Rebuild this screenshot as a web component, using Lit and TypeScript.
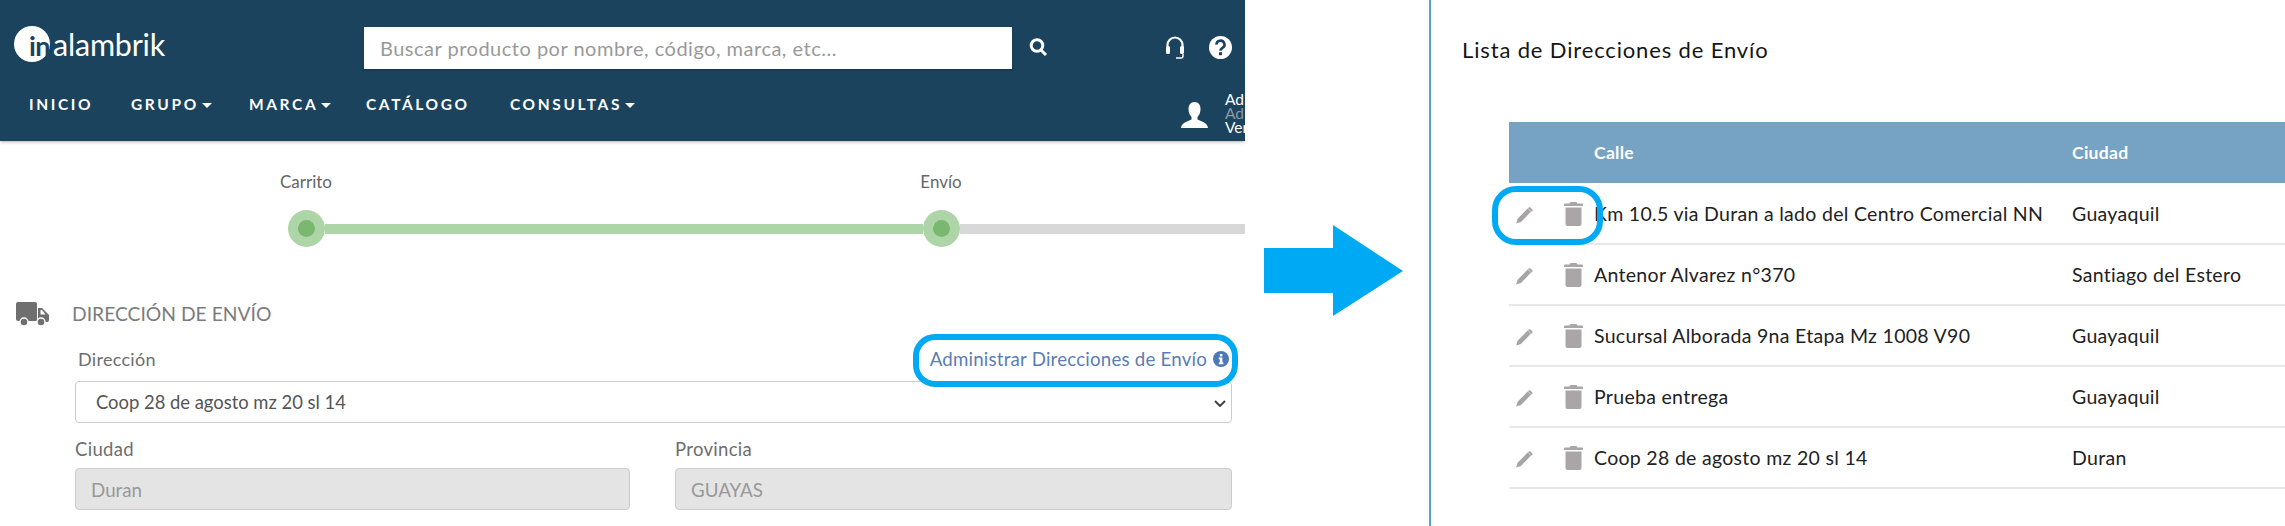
import { LitElement, html, css } from "lit";
import { customElement } from "lit/decorators.js";

const ROWS = [
  ["Km 10.5 via Duran a lado del Centro Comercial NN", "Guayaquil"],
  ["Antenor Alvarez n°370", "Santiago del Estero"],
  ["Sucursal Alborada 9na Etapa Mz 1008 V90", "Guayaquil"],
  ["Prueba entrega", "Guayaquil"],
  ["Coop 28 de agosto mz 20 sl 14", "Duran"],
];

const caret = html`<span class="caret"></span>`;

const pencil = html`<svg class="pencil" viewBox="0 0 18 17" width="18" height="17">
  <path fill="#a8a4a5" d="M12.6 1.6 16 4.6 6 15 1.2 16.6 2.6 11.8z"/>
  <path fill="#a8a4a5" d="M13.6.6a1.3 1.3 0 0 1 1.8 0l1.8 1.7a1.3 1.3 0 0 1 0 1.8l-.6.6-3.6-3.4z"/>
</svg>`;

const trash = html`<svg class="trash" viewBox="0 0 19 24" width="19" height="24">
  <path fill="#aaa5a6" d="M6.5 0h6l1 1.6H18a1 1 0 0 1 1 1V4H0V2.6a1 1 0 0 1 1-1h4.5z"/>
  <path fill="#aaa5a6" d="M1.5 5.5h16V22a2 2 0 0 1-2 2h-12a2 2 0 0 1-2-2z"/>
</svg>`;

@customElement("app-root")
export class AppRoot extends LitElement {
  static styles = css`
    :host { display: block; width: 2285px; height: 526px; overflow: hidden; background: #fff;
      font-family: "Lato", "Noto Sans", sans-serif; color: #555; }
    * { box-sizing: border-box; }
    .page { display: flex; height: 526px; }

    .left { width: 1245px; flex: none; height: 526px; overflow: hidden; position: relative; }
    .hdr { height: 141px; background: #1b435d; box-shadow: 0 1px 3px rgba(0,0,0,.3); display: flex; flex-direction: column; position: relative; }
    .top { display: flex; align-items: flex-start; height: 84px; padding-left: 14px; }
    .logo { display: flex; width: 350px; height: 37px; margin-top: 26px; color: #fff; flex: none; }
    .disc { width: 36px; height: 36px; border-radius: 50%; background: #fff; color: #1b435d; font-weight: 700; font-size: 27px; line-height: 40px; padding-left: 15px; letter-spacing: -.5px; flex: none; white-space: nowrap; }
    .word { font-size: 30.5px; line-height: 36px; margin-left: 3px; font-weight: 400; letter-spacing: -.2px; }
    .search { width: 648px; height: 42px; margin-top: 27px; border: 0; background: #fff; padding: 0 16px; font: 20px "Lato", sans-serif; letter-spacing: .5px; color: #888; flex: none; outline: none; box-shadow: 0 1px 2px rgba(0,0,0,.2); }
    .search::placeholder { color: #999; opacity: 1; }
    .i-search { margin: 38px 0 0 17px; flex: none; }
    .i-head { margin: 36px 0 0 117px; flex: none; }
    .i-help { margin: 36px 0 0 24px; flex: none; }

    .nav { display: flex; align-items: flex-start; padding-left: 29px; height: 57px; position: relative; }
    .nav a { color: #fff; font-size: 15.5px; font-weight: 700; letter-spacing: 2.6px; line-height: 20px; margin-top: 10px; display: flex; align-items: center; white-space: nowrap; flex: none; }
    .nav a.inicio { width: 102px; }
    .nav a.grupo { width: 118px; }
    .nav a.marca { width: 117px; }
    .nav a.cat { width: 144px; }
    .nav a.cons { width: 671px; }
    .caret { width: 0; height: 0; border-left: 5px solid transparent; border-right: 5px solid transparent; border-top: 5px solid #fff; margin-left: 3px; margin-top: 2px; }
    .user { flex: none; margin-top: 18px; }
    .who { flex: none; width: 19px; margin: 8px 0 0 17px; font-size: 15.5px; line-height: 14px; color: #fff; white-space: nowrap; }
    .who div { height: 14px; }
    .who .m { color: #8c9aa5; }

    .labels { display: flex; height: 69px; padding: 32px 0 0 256px; font-size: 17px; line-height: 18px; color: #666; }
    .labels span { width: 100px; text-align: center; }
    .labels span + span { margin-left: 535px; }
    .track { display: flex; align-items: center; height: 37px; padding-left: 288px; }
    .dot { width: 37px; height: 37px; border-radius: 50%; background: #aed5a8; display: flex; align-items: center; justify-content: center; flex: none; }
    .dot i { display: block; width: 17px; height: 17px; border-radius: 50%; background: #7ab870; }
    .bar { height: 10px; background: #aed5a8; width: 598px; flex: none; }
    .bar.rest { background: #d8d8d8; flex: 1; }

    .sec { display: flex; align-items: center; height: 24px; margin: 55px 0 0 16px; }
    .sec h2 { margin: 0 0 2px 23px; font-size: 19.3px; font-weight: 400; color: #7c7c7c; white-space: nowrap; }
    .form { padding: 0 13px 0 75px; }
    .rowlab { display: flex; justify-content: space-between; align-items: center; height: 20px; margin-top: 23px; padding-left: 3px; }
    .lab { font-size: 18px; letter-spacing: .3px; line-height: 20px; color: #6e6e6e; }
    .link { font-size: 18.7px; letter-spacing: .2px; line-height: 20px; color: #5b7db2; display: flex; align-items: center; margin-right: 3px; white-space: nowrap; }
    .link svg { margin-left: 6px; }
    .selwrap { position: relative; height: 42px; margin-top: 12px; }
    select { width: 100%; height: 42px; appearance: none; background: #fff; border: 1px solid #ccc; border-radius: 4px; padding: 0 20px; font: 18.4px "Lato", sans-serif; color: #555; outline: none; }
    .chev { position: absolute; right: 6px; top: 19px; pointer-events: none; }
    .cols { display: grid; grid-template-columns: 555px 557px; column-gap: 45px; margin-top: 16px; }
    .cols label { display: block; font-size: 18.5px; letter-spacing: .3px; line-height: 20px; color: #6e6e6e; margin-bottom: 9px; }
    .cols input { width: 100%; height: 42px; background: #e4e4e4; border: 1px solid #ccc; border-radius: 4px; padding: 0 15px; font: 18.8px "Lato", sans-serif; color: #999; }

    .mark { position: absolute; border: 6.5px solid #00a9f4; background: transparent; }
    .m1 { left: 913px; top: 334px; width: 325px; height: 53px; border-radius: 22px; }

    .mid { width: 184px; flex: none; padding: 225px 0 0 19px; }

    .right { flex: 1; height: 526px; border-left: 2px solid #5a9fc4; position: relative; }
    .right h1 { margin: 0; padding: 37px 0 0 31px; font-size: 22px; letter-spacing: .85px; line-height: 26px; font-weight: 400; color: #151515; height: 122px; white-space: nowrap; }
    .tbl { margin-left: 78px; }
    .r { display: grid; grid-template-columns: 85px 478px 1fr; align-items: center; height: 61px; border-bottom: 2px solid #e8e8e8; font-size: 19.5px; letter-spacing: .3px; color: #222; }
    .r.h { background: #76a3c3; color: #fff; font-size: 17.5px; letter-spacing: .3px; font-weight: 700; border-bottom: 0; margin-bottom: 1px; }
    .acts { display: flex; align-items: center; padding-left: 6px; }
    .pencil { margin-top: 4px; }
    .trash { margin-left: 31px; }
    .m2 { left: 61px; top: 186px; width: 111px; height: 59px; border-radius: 24px; }
  `;

  render() {
    return html`<div class="page">
      <section class="left">
        <header class="hdr">
          <div class="top">
            <div class="logo"><div class="disc">in</div><div class="word">alambrik</div></div>
            <input class="search" placeholder="Buscar producto por nombre, código, marca, etc..." />
            <svg class="i-search" width="19" height="18" viewBox="0 0 19 18" fill="none" stroke="#fff" stroke-width="3">
              <circle cx="8" cy="7.5" r="5.8"/><path d="M12 12l5 5"/>
            </svg>
            <svg class="i-head" width="20" height="23" viewBox="0 0 20 23" fill="none" stroke="#fff">
              <path stroke-width="2.2" d="M2.5 15V9a7.5 7.5 0 0 1 15 0v6"/>
              <rect x="1" y="10" width="4" height="8" rx="1.5" fill="#fff" stroke="none"/>
              <rect x="15" y="10" width="4" height="8" rx="1.5" fill="#fff" stroke="none"/>
              <path stroke-width="1.4" d="M18 18v2a2 2 0 0 1-2 2h-5"/>
            </svg>
            <svg class="i-help" width="23" height="23" viewBox="0 0 23 23">
              <circle cx="11.5" cy="11.5" r="11.5" fill="#fff"/>
              <path d="M7.5 8.6a4 3.8 0 1 1 6 3.2c-1.3.8-2 1.4-2 3" fill="none" stroke="#1b435d" stroke-width="2.6"/>
              <rect x="10" y="16.2" width="3" height="3" fill="#1b435d"/>
            </svg>
          </div>
          <nav class="nav">
            <a class="inicio">INICIO</a>
            <a class="grupo">GRUPO${caret}</a>
            <a class="marca">MARCA${caret}</a>
            <a class="cat">CATÁLOGO</a>
            <a class="cons">CONSULTAS${caret}</a>
            <svg class="user" width="27" height="26" viewBox="0 0 27 26" fill="#fff">
              <path d="M13.5 0c4 0 6 3 6 7 0 3-1 6-3 8v2.500c3 1.500 10 3 10.500 8.500H0c.5-5.500 7.500-7 10.500-8.500V15c-2-2-3-5-3-8 0-4 2-7 6-7z"/>
            </svg>
            <div class="who"><div>Ad</div><div class="m">Ad</div><div>Ver</div></div>
          </nav>
        </header>

        <div class="labels"><span>Carrito</span><span>Envío</span></div>
        <div class="track">
          <div class="dot"><i></i></div><div class="bar"></div>
          <div class="dot"><i></i></div><div class="bar rest"></div>
        </div>

        <div class="sec">
          <svg width="33" height="24" viewBox="0 0 33 24" fill="#6f6f6f">
            <path d="M2 0h17a2 2 0 0 1 2 2v17H2a2 2 0 0 1-2-2V2a2 2 0 0 1 2-2z"/>
            <path d="M22 6h4l7 7v5a2 2 0 0 1-2 2h-9z"/>
            <path fill="#fff" d="M24.500 8h1.500l3.500 4.500h-5z"/>
            <circle cx="8" cy="20" r="4" stroke="#fff" stroke-width="1.400"/>
            <circle cx="25" cy="20" r="4" stroke="#fff" stroke-width="1.400"/>
          </svg>
          <h2>DIRECCIÓN DE ENVÍO</h2>
        </div>

        <div class="form">
          <div class="rowlab">
            <span class="lab">Dirección</span>
            <span class="link">Administrar Direcciones de Envío
              <svg width="16" height="16" viewBox="0 0 16 16">
                <circle cx="8" cy="8" r="8" fill="#4d78b8"/>
                <rect x="6.800" y="3" width="2.600" height="2.400" fill="#fff"/>
                <path fill="#fff" d="M5.800 6.600h3.600v5h1v1.600H5.800v-1.600h1v-3.400h-1z"/>
              </svg>
            </span>
          </div>
          <div class="selwrap">
            <select><option>Coop 28 de agosto mz 20 sl 14</option></select>
            <svg class="chev" width="12" height="7" viewBox="0 0 12 7" fill="none" stroke="#444" stroke-width="2"><path d="M1 1l5 5 5-5"/></svg>
          </div>
          <div class="cols">
            <div><label>Ciudad</label><input disabled value="Duran" /></div>
            <div><label>Provincia</label><input disabled value="GUAYAS" /></div>
          </div>
        </div>
        <div class="mark m1"></div>
      </section>

      <div class="mid">
        <svg width="139" height="91" viewBox="0 0 139 91"><path fill="#00a9f4" d="M0 23h69V0l70 46-70 45V68H0z"/></svg>
      </div>

      <section class="right">
        <h1>Lista de Direcciones de Envío</h1>
        <div class="tbl">
          <div class="r h"><span></span><span>Calle</span><span>Ciudad</span></div>
          ${ROWS.map(([a, c]) => html`<div class="r">
            <div class="acts">${pencil}${trash}</div><span>${a}</span><span>${c}</span>
          </div>`)}
        </div>
        <div class="mark m2"></div>
      </section>
    </div>`;
  }
}
